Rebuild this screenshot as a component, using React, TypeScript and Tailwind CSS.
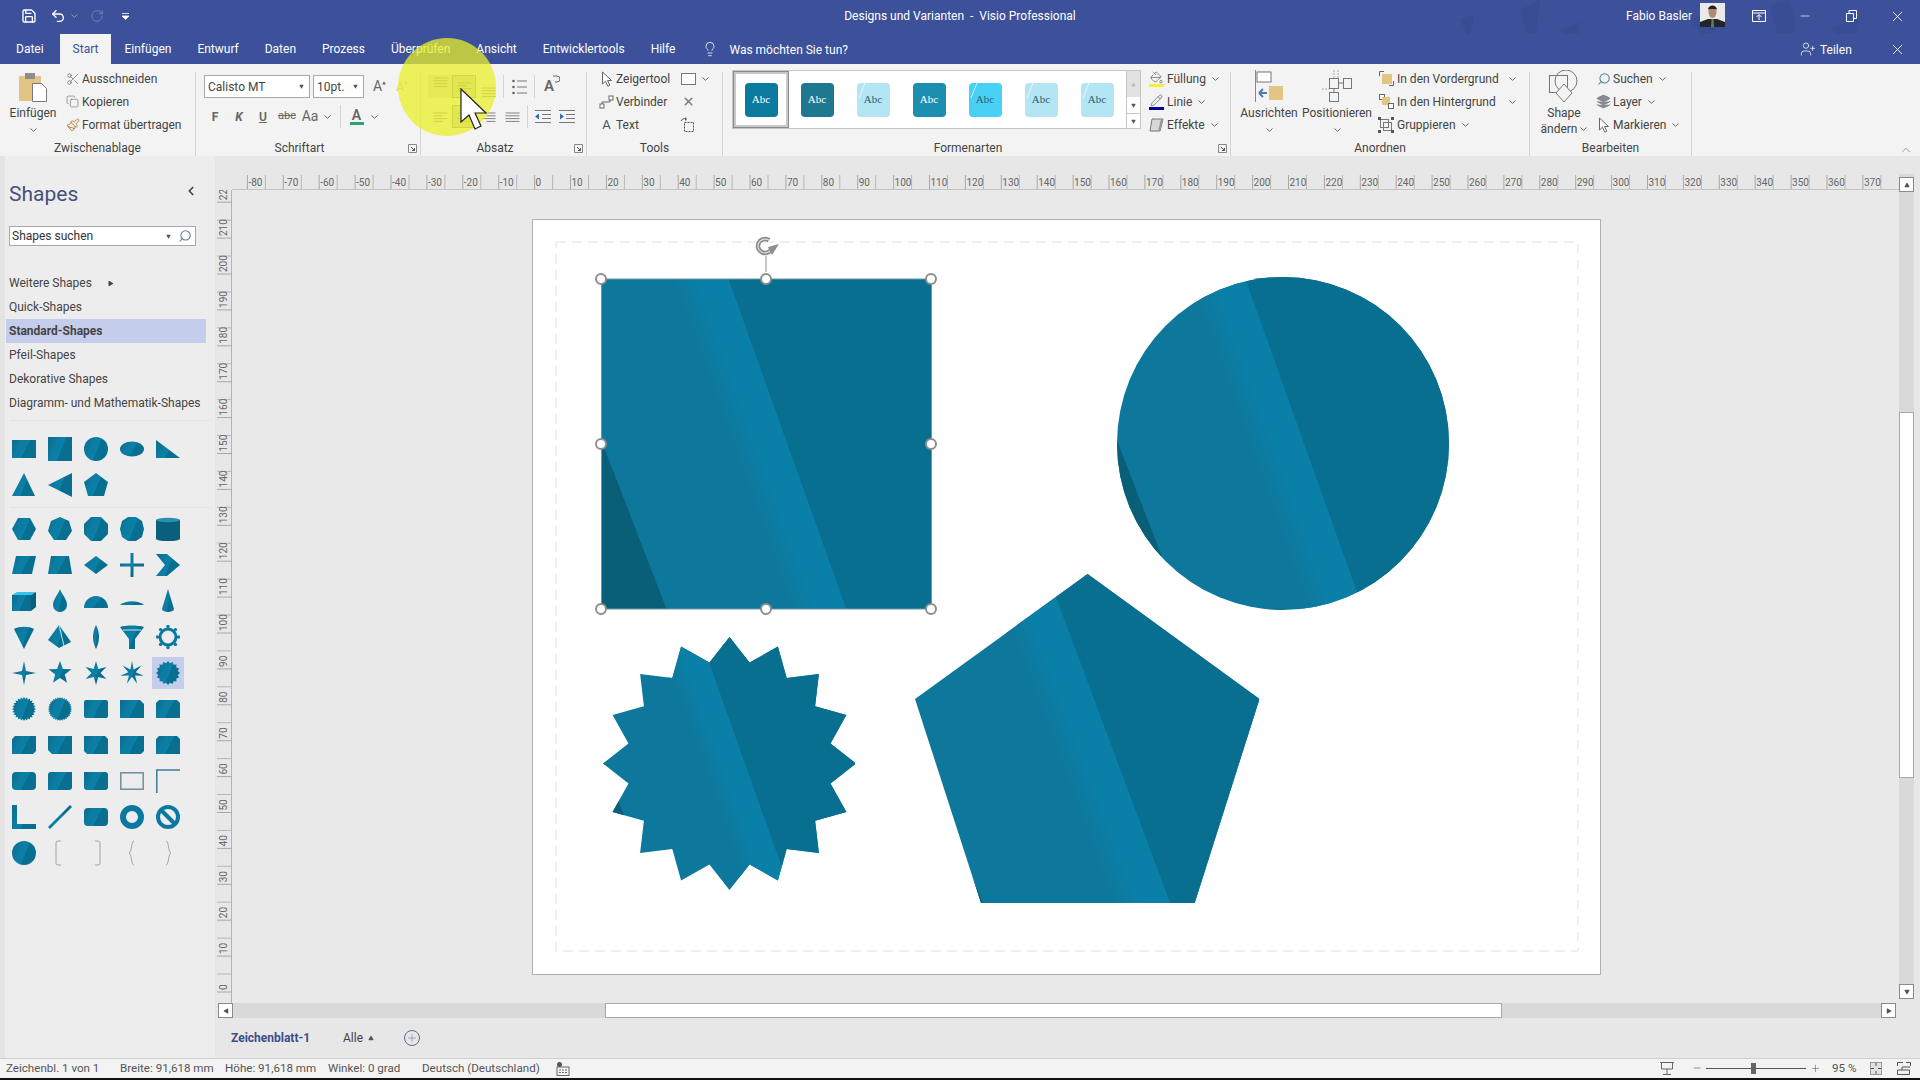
import type { ReactNode } from 'react';
import { Scissors, Copy, Paintbrush, Undo2, RotateCw, Lightbulb, Save, X, Minus, UserPlus, Search, ChevronLeft, ChevronUp, Plus, Layers, PaintBucket, Pencil, Play, Triangle } from 'lucide-react';

const TILE = 'url(#tile)';

function starPoints(n: number, R: number, r: number, cx = 12, cy = 12) {
  const pts: string[] = [];
  for (let i = 0; i < n * 2; i++) {
    const rad = i % 2 === 0 ? R : r;
    const a = (Math.PI * i) / n - Math.PI / 2;
    pts.push(`${(cx + rad * Math.cos(a)).toFixed(1)},${(cy + rad * Math.sin(a)).toFixed(1)}`);
  }
  return pts.join(' ');
}

const Pg = ({ p }: { p: string }) => <polygon points={p} fill={TILE} />;
const Rr = ({ rx = 0, y = 3, h = 18 }: { rx?: number; y?: number; h?: number }) => <rect x="0" y={y} width="24" height={h} rx={rx} fill={TILE} />;

const rowsTop: ReactNode[][] = [
  [<Rr />, <Rr y={0} h={24} />, <circle cx="12" cy="12" r="12" fill={TILE} />, <ellipse cx="12" cy="12" rx="12" ry="7.5" fill={TILE} />, <Pg p="0,3 24,21 0,21" />],
  [<Pg p="12,0 23,23 0,23" />, <Pg p="24,0 24,24 0,12" />, <Pg p="12,0 24,9 20,23 4,23 0,9" />],
];

const rowsMain: ReactNode[][] = [
  [
    <Pg p="6,1 18,1 24,12 18,23 6,23 0,12" />,
    <Pg p="12,0 21,4 24,14 18,23 6,23 0,14 3,4" />,
    <Pg p="7,0 17,0 24,7 24,17 17,24 7,24 0,17 0,7" />,
    <Pg p="8,0 16,0 22,4 24,12 22,20 16,24 8,24 2,20 0,12 2,4" />,
    <g><rect x="0" y="3" width="24" height="19" fill="#0a5f7c" /><ellipse cx="12" cy="22" rx="12" ry="2" fill="#0a5f7c" /><ellipse cx="12" cy="3" rx="12" ry="2.2" fill="#2b8fb0" /></g>,
  ],
  [
    <Pg p="4,3 24,3 20,21 0,21" />,
    <Pg p="3,3 21,3 24,21 0,21" />,
    <Pg p="12,3 24,12 12,21 0,12" />,
    <path d="M10.5 0h3v10.5H24v3H13.5V24h-3V13.5H0v-3h10.5z" fill={TILE} />,
    <Pg p="0,1 11,1 24,12 11,23 0,23 9,12" />,
  ],
  [
    <g><rect x="0" y="6" width="19" height="16" fill={TILE} /><polygon points="0,6 5,3 24,3 19,6" fill="#38c4ea" /><polygon points="19,6 24,3 24,18 19,22" fill="#0a5f7c" /></g>,
    <path d="M12 0c2 6 7 10 7 16a7 7 0 0 1-14 0c0-6 5-10 7-16z" fill={TILE} />,
    <path d="M0 19a12 12 0 0 1 24 0z" fill={TILE} />,
    <path d="M0 16c6-5 18-5 24 0z" fill={TILE} />,
    <path d="M12 0l6 20a6 3 0 0 1-12 0z" fill={TILE} />,
  ],
  [
    <path d="M2 4c5-3 15-3 20 0L12 24z" fill={TILE} />,
    <g><polygon points="11,0 23,17 11,23 0,15" fill={TILE} /><line x1="11" y1="0" x2="16" y2="21" stroke="#bfe8f4" strokeWidth="1" /></g>,
    <path d="M12 0c8 8 8 16 0 24c-8-8-8-16 0-24z" transform="translate(6 0) scale(.5 1)" fill={TILE} />,
    <g><path d="M0 2c6-2 18-2 24 0L15 14v10H9V14z" fill={TILE} /><line x1="3" y1="5" x2="21" y2="5" stroke="#bfe8f4" strokeWidth="1" /></g>,
    <g>
      <circle cx="12" cy="12" r="8" fill="none" stroke="#0a78a0" strokeWidth="3" />
      {[0, 45, 90, 135, 180, 225, 270, 315].map((d) => <circle key={d} cx={12 + 10.5 * Math.cos((d * Math.PI) / 180)} cy={12 + 10.5 * Math.sin((d * Math.PI) / 180)} r="1.7" fill="#0a78a0" />)}
    </g>,
  ],
  [
    <Pg p={starPoints(4, 12, 2.8)} />,
    <Pg p={starPoints(5, 12, 5)} />,
    <Pg p={starPoints(6, 12, 4.5)} />,
    <Pg p={starPoints(7, 12, 3.8)} />,
    <Pg p={starPoints(16, 12, 10)} />,
  ],
  [
    <Pg p={starPoints(24, 12, 10)} />,
    <Pg p={starPoints(32, 12, 10.5)} />,
    <Rr rx={2} />,
    <path d="M0 3h20l4 4v14H0z" fill={TILE} />,
    <path d="M3 3h18l3 3v15H0V6z" fill={TILE} />,
  ],
  [
    <path d="M3 3h21v15l-3 3H0V6z" fill={TILE} />,
    <path d="M0 3h24v18H4l-4-4z" fill={TILE} />,
    <path d="M0 3h21l3 3v15H3l-3-3z" fill={TILE} />,
    <path d="M0 3h24v15l-3 3H0z" fill={TILE} />,
    <path d="M3 3h18l3 3v15H0V6z" fill={TILE} />,
  ],
  [
    <Rr rx={4} />,
    <path d="M3 3h21v15a3 3 0 0 1-3 3H0V6a3 3 0 0 1 3-3z" fill={TILE} />,
    <path d="M0 3h21a3 3 0 0 1 3 3v12a3 3 0 0 1-3 3H3a3 3 0 0 1-3-3z" fill={TILE} />,
    <rect x="0.8" y="3.8" width="22.4" height="16.4" fill="none" stroke="#6d8f9e" strokeWidth="1.5" />,
    <polyline points="0.8,24 0.8,1 24,1" fill="none" stroke="#3f7d95" strokeWidth="1.5" />,
  ],
  [
    <path d="M0 0h5v19h19v5H0z" fill={TILE} />,
    <Pg p="22,0 24,2 2,24 0,22" />,
    <Rr rx={4} />,
    <circle cx="12" cy="12" r="9" fill="none" stroke="#0a78a0" strokeWidth="6" />,
    <g><circle cx="12" cy="12" r="10" fill="none" stroke="#0a78a0" strokeWidth="4" /><line x1="5" y1="5" x2="19" y2="19" stroke="#0a78a0" strokeWidth="4" /></g>,
  ],
];

function Chev({ className = '' }: { className?: string }) {
  return (
    <svg width="7" height="4" viewBox="0 0 7 4" className={className}>
      <polyline points="0.5,0.5 3.5,3.3 6.5,0.5" fill="none" stroke="#666" />
    </svg>
  );
}

function Arrow({ size = 14 }: { size?: number }) {
  return (
    <svg width={size} height={size + 2} viewBox="0 0 14 16">
      <path d="M2.500 1v12l3-2.800 2.300 5 2-.9-2.300-4.800h4z" fill="#fff" stroke="#666" />
    </svg>
  );
}

function Launcher() {
  return (
    <svg width="9" height="9" viewBox="0 0 9 9" className="absolute right-[3px] bottom-[3px]">
      <path d="M.5 8.5v-8h8v8z" fill="none" stroke="#888" />
      <path d="M3 3l3.5 3.5M6.5 4v2.5H4" fill="none" stroke="#555" />
    </svg>
  );
}

function Group({ width, label, launcher, children }: { width: string; label: string; launcher?: boolean; children: ReactNode }) {
  return (
    <div className={`relative flex flex-col ${width}`}>
      <div className="flex h-[69px]">{children}</div>
      <div className={`mt-[4px] h-[16px] text-center leading-[16px] ${launcher ? 'pr-[17px]' : ''}`}>{label}</div>
      {launcher && <Launcher />}
    </div>
  );
}

const Sep = () => <div className="mt-[5px] h-[84px] w-px bg-[#d4d4d4]" />;

function Row({ icon, iconW = 'w-[19px]', text, chev }: { icon?: ReactNode; iconW?: string; text: string; chev?: boolean }) {
  return (
    <div className="flex h-[23px] items-center whitespace-nowrap">
      <span className={`flex justify-center ${iconW}`}>{icon}</span>
      <span>{text}</span>
      {chev && <Chev className="ml-[6px]" />}
    </div>
  );
}

function BigBtn({ width, icon, lines, chevInline }: { width: string; icon: ReactNode; lines: string[]; chevInline?: boolean }) {
  return (
    <div className={`flex flex-col items-center ${width}`}>
      <div className="flex h-[35px] items-end">{icon}</div>
      <div className="mt-[3px] leading-[16px]">{lines[0]}</div>
      {chevInline ? (
        <div className="flex items-center gap-[3px] leading-[16px]">{lines[1]}<Chev /></div>
      ) : (
        <Chev className="mt-[7px]" />
      )}
    </div>
  );
}

// Paragraph lines, used for both alignment rows in Absatz
function Lines({ mode, valign = 'mid' }: { mode: 'l' | 'c' | 'r' | 'j'; valign?: 'top' | 'mid' | 'bot' }) {
  const y0 = valign === 'top' ? 1 : valign === 'mid' ? 6 : 11;
  const rows = [14, 9, 14, 9];
  return (
    <svg width="15" height="20" viewBox="0 0 15 20">
      {rows.map((w, i) => {
        const wid = mode === 'j' || valign !== 'mid' ? 14 : w;
        const x = mode === 'l' || mode === 'j' ? 0.5 : mode === 'c' ? 7.5 - wid / 2 : 14.5 - wid;
        return <line key={i} x1={x} x2={x + wid} y1={y0 + i * 2.8} y2={y0 + i * 2.8} stroke="#777" strokeWidth="0.9" />;
      })}
    </svg>
  );
}

function IconBtn({ active, soft, children }: { active?: boolean; soft?: boolean; children: ReactNode }) {
  return (
    <div className={`flex h-[23px] w-[24px] items-center justify-center ${active ? 'border border-[#8c8c8c] bg-[#c9c9c9]' : soft ? 'bg-[#dcdcdc]' : ''}`}>
      {children}
    </div>
  );
}

function Swatch({ bg, dark, selected }: { bg: string; dark?: boolean; selected?: boolean }) {
  return (
    <div className={`flex h-[57px] w-[56px] items-center justify-center ${selected ? 'border border-[#8a8a8a] outline-2 -outline-offset-3 outline-[#c8c8c8]' : ''}`}>
      <div className={`relative flex h-[34px] w-[33px] items-center justify-center rounded-[4px] font-['Liberation_Serif',serif] text-[11px] ${bg} ${dark ? 'text-[#33606e]' : 'text-white'}`}>
        {dark && (
          <svg width="33" height="34" viewBox="0 0 33 34" className="absolute inset-0">
            <line x1="8" y1="0" x2="2" y2="15" stroke="#ffffff" strokeOpacity=".7" />
          </svg>
        )}
        Abc
      </div>
    </div>
  );
}

function Clipboard() {
  return (
    <svg width="28" height="30" viewBox="0 0 28 30">
      <rect x="0" y="4" width="22" height="25" rx="1" fill="#e2c583" />
      <rect x="6" y="1" width="10" height="6" fill="#8d8d8d" />
      <path d="M13.500 11.500h9l5 5v13h-14z" fill="#fff" stroke="#7a7a7a" />
    </svg>
  );
}

function HRuler() {
  const labels = Array.from({ length: 46 }, (_, i) => -80 + i * 10);
  return (
    <svg width="1667" height="16" viewBox="232 174 1667 16">
      <line x1="232" x2="1899" y1="189.500" y2="189.500" stroke="#c4c4c4" />
      {labels.map((v) => {
        const x = 534.6 + v * 3.59;
        return (
          <g key={v}>
            <line x1={x} x2={x} y1="175" y2="189" stroke="#a8a8a8" />
            <line x1={x + 18} x2={x + 18} y1="175" y2="189" stroke="#b8b8b8" />
            <text x={x + 1} y="186" fontSize="10" fill="#666">{v}</text>
          </g>
        );
      })}
    </svg>
  );
}

function VRuler() {
  const labels = Array.from({ length: 23 }, (_, i) => i * 10);
  return (
    <svg width="17" height="813" viewBox="215 190 17 813">
      <line x1="231.500" x2="231.500" y1="190" y2="1003" stroke="#b4b4b4" />
      {labels.map((v) => {
        const y = 992 - v * 3.59;
        return (
          <g key={v}>
            <line x1="217" x2="232" y1={y} y2={y} stroke="#a8a8a8" />
            <line x1="217" x2="232" y1={y - 18} y2={y - 18} stroke="#b8b8b8" />
            <text transform={`translate(227 ${y - 2}) rotate(-90)`} fontSize="10" fill="#666">{v}</text>
          </g>
        );
      })}
    </svg>
  );
}

// The diagonal sheen that the theme lays over every shape, mapped on the shape's bounding box
function Themed({ id, x, y, w, h, shape }: { id: string; x: number; y: number; w: number; h: number; shape: ReactNode }) {
  return (
    <g>
      <clipPath id={id}>{shape}</clipPath>
      <g clipPath={`url(#${id})`}>
        <g transform={`translate(${x} ${y}) scale(${w} ${h})`}>
          <rect width="1" height="1" fill="#0e789c" />
          <polygon points="0,0.49 0.197,1 0,1" fill="#0a5f78" />
          <polygon points="0.2,0 0.385,0 0.742,1 0.56,1" fill="url(#band)" />
          <polygon points="0.385,0 1,0 1,1 0.742,1" fill="#096f90" />
        </g>
      </g>
    </g>
  );
}

function Drawing() {
  const handles = [[601, 279], [766, 279], [931, 279], [601, 444], [931, 444], [601, 609], [766, 609], [931, 609]];
  const star16 = starPoints(16, 126.5, 103, 729.500, 763.500);
  return (
    <svg width="1069" height="756" viewBox="532 219 1069 756" className="absolute -top-px -left-px">
      <defs>
        <linearGradient id="band" gradientUnits="userSpaceOnUse" x1="0.22" y1="0" x2="0.29" y2="-0.025">
          <stop offset="0" stopColor="#0e789c" />
          <stop offset="1" stopColor="#0a80a8" />
        </linearGradient>
      </defs>
      <rect x="556" y="242" width="1022" height="709" fill="none" stroke="#e2e2e2" strokeDasharray="10 6" />
      <Themed id="c-square" x={601.500} y={279} w={330} h={330} shape={<rect x="601.500" y="279" width="330" height="330" />} />
      <rect x="601.500" y="279" width="330" height="330" fill="none" stroke="#6f97aa" />
      <Themed id="c-circle" x={1117} y={277} w={332} h={333} shape={<ellipse cx="1283" cy="443.500" rx="166" ry="166.500" />} />
      <Themed id="c-star" x={603} y={637} w={252} h={253} shape={<polygon points={star16} />} />
      <Themed id="c-pent" x={915} y={574} w={344} h={329} shape={<polygon points="1087.600,574 1259.500,699 1194.700,903 981,903 915,699" />} />
      <line x1="766" x2="766" y1="256" y2="272" stroke="#8e8e8e" />
      {handles.map(([x, y]) => <circle key={`${x}-${y}`} cx={x} cy={y} r="5" fill="#fff" stroke="#8e8e8e" strokeWidth="2" />)}
      <circle cx="765" cy="246" r="7" fill="none" stroke="#8e8e8e" strokeWidth="4.500" strokeDasharray="34 10" transform="rotate(25 765 246)" />
      <circle cx="765" cy="246" r="7" fill="none" stroke="#e6e6e6" strokeWidth="1" strokeDasharray="34 10" transform="rotate(25 765 246)" />
      <polygon points="768,247 779,244 772,255" fill="#8e8e8e" />
    </svg>
  );
}

function Avatar() {
  return (
    <svg width="25" height="24" viewBox="0 0 25 24">
      <rect width="25" height="24" fill="#e9e9e9" />
      <path d="M0 24v-5l8-3h9l8 3v5z" fill="#22262b" />
      <ellipse cx="12.500" cy="9" rx="4" ry="6" fill="#b08a74" />
      <path d="M8 7c0-6 9-6 9 0l-1-1H9z" fill="#23211f" />
      <path d="M11.500 16h2l.5 8h-3z" fill="#5d7f6a" />
    </svg>
  );
}

function Palette({ rows }: { rows: ReactNode[][] }) {
  return (
    <div className="grid grid-cols-[repeat(5,36px)] pl-px">
      {rows.flatMap((row, r) =>
        row.map((icon, c) => (
          <div key={`${r}-${c}`} className="flex h-[36px] items-center justify-center">
            <div className={`flex h-[32px] w-[32px] items-center justify-center ${rows === rowsMain && r === 4 && c === 4 ? 'bg-[#c5cdec]' : ''}`}>
              <svg width="24" height="24" viewBox="0 0 24 24" overflow="visible">{icon}</svg>
            </div>
          </div>
        )),
      )}
    </div>
  );
}

function ScrollBtn({ children }: { children: ReactNode }) {
  return <div className="flex h-[15px] w-[15px] shrink-0 items-center justify-center border border-[#8a8a8a] bg-white">{children}</div>;
}

const tabs = ['Datei', 'Start', 'Einfügen', 'Entwurf', 'Daten', 'Prozess', 'Überprüfen', 'Ansicht', 'Entwicklertools', 'Hilfe'];
const stencils = ['Weitere Shapes', 'Quick-Shapes', 'Standard-Shapes', 'Pfeil-Shapes', 'Dekorative Shapes', 'Diagramm- und Mathematik-Shapes'];

export default function App() {
  return (
    <div className="relative flex h-[1080px] w-[1920px] flex-col overflow-hidden bg-black font-['Roboto',sans-serif] text-[12px] text-[#444]">
      <svg className="absolute h-0 w-0">
        <defs>
          <linearGradient id="tile" x1="0" y1="0.3" x2="1" y2="0.7">
            <stop offset="0" stopColor="#0c6f90" />
            <stop offset="0.3" stopColor="#0c7ca2" />
            <stop offset="0.55" stopColor="#0a80a8" />
            <stop offset="0.56" stopColor="#086f90" />
            <stop offset="1" stopColor="#086f90" />
          </linearGradient>
        </defs>
      </svg>

      {/* title bar */}
      <div className="relative flex h-[34px] shrink-0 items-center bg-[#3c519a] pb-[2px] text-white">
        <svg width="480" height="64" viewBox="0 0 480 64" className="absolute top-0 left-[1440px]">
          <g fill="#394d95">
            <polygon points="20,20 34,14 30,40" />
            <polygon points="80,10 100,0 96,32 88,36" />
            <polygon points="120,30 140,22 136,46" />
            <polygon points="250,20 280,6 270,44" />
            <polygon points="330,6 350,0 356,30 340,44" />
            <polygon points="390,28 420,18 412,50" />
          </g>
        </svg>
        <Save size={16} strokeWidth={2} className="absolute left-[21px]" />
        <Undo2 size={16} strokeWidth={2} className="absolute left-[50px]" />
        <Chev className="absolute left-[71px] invert" />
        <RotateCw size={14} strokeWidth={1.5} className="absolute left-[90px] opacity-30" />
        <svg width="7" height="7" viewBox="0 0 7 7" className="absolute left-[122px]"><path d="M0 .5h7M0 3h7L3.500 6.500z" stroke="#fff" fill="#fff" strokeWidth=".8" /></svg>
        <div className="w-full text-center">Designs und Varianten&nbsp; -&nbsp; Visio Professional</div>
        <span className="absolute left-[1626px]">Fabio Basler</span>
        <div className="absolute top-[3px] left-[1700px]"><Avatar /></div>
        <svg width="14" height="12" viewBox="0 0 14 12" className="absolute left-[1752px]"><path d="M.5.5h13v11H.5zM.5 3h13M7 10V5M4.500 7L7 4.500 9.500 7" fill="none" stroke="#fff" /></svg>
        <Minus size={14} strokeWidth={1.2} className="absolute left-[1798px]" />
        <svg width="11" height="12" viewBox="0 0 11 12" className="absolute left-[1846px]"><path d="M.5 3.500h7v8h-7zM3 3.500V.5h7.500v8H7.500" fill="none" stroke="#fff" /></svg>
        <X size={17} strokeWidth={1.2} className="absolute left-[1889px]" />
      </div>

      {/* tabs */}
      <div className="relative flex h-[30px] shrink-0 items-stretch bg-[#3c519a] pl-[3px] text-white">
        {tabs.map((t) => (
          <div key={t} className={`flex items-center px-[13px] ${t === 'Start' ? 'bg-[#f3f3f3] text-[#3c519a]' : ''} ${t === 'Datei' ? 'mr-[3px]' : ''}`}>{t}</div>
        ))}
        <Lightbulb size={16} strokeWidth={1.2} className="mt-[7px] ml-[14px]" />
        <span className="mt-[7px] ml-[11px]">Was möchten Sie tun?</span>
        <UserPlus size={16} strokeWidth={1.1} className="absolute top-[7px] left-[1800px]" />
        <span className="absolute top-[7px] left-[1820px]">Teilen</span>
        <X size={17} strokeWidth={1.2} className="absolute top-[7px] left-[1889px]" />
      </div>

      {/* ribbon */}
      <div className="relative flex h-[92px] shrink-0 bg-[#f3f3f3] pt-[3px]">
        <Group width="w-[195px]" label="Zwischenablage">
          <div className="ml-[10px] w-[46px]">
            <BigBtn width="w-[46px]" icon={<Clipboard />} lines={['Einfügen']} />
          </div>
          <div className="ml-[7px]">
            <Row icon={<Scissors size={14} strokeWidth={1.2} className="text-[#666]" />} text="Ausschneiden" />
            <Row icon={<Copy size={13} strokeWidth={1.1} className="text-[#666]" />} text="Kopieren" />
            <Row icon={<Paintbrush size={14} strokeWidth={1.5} className="text-[#a5712c]" />} text="Format übertragen" />
          </div>
        </Group>
        <Sep />
        <Group width="w-[224px]" label="Schriftart" launcher>
          <div>
            <div className="mt-[8px] ml-[8px] flex h-[23px] items-center">
              <div className="flex h-[23px] w-[106px] items-center justify-between border border-[#a8a8a8] bg-white pr-[5px] pl-[3px]">Calisto MT<Triangle size={5} fill="#555" strokeWidth={0} className="rotate-180" /></div>
              <div className="ml-[3px] flex h-[23px] w-[51px] items-center justify-between border border-[#a8a8a8] bg-white pr-[5px] pl-[3px]">10pt.<Triangle size={5} fill="#555" strokeWidth={0} className="rotate-180" /></div>
              <span className="ml-[9px] text-[14px] text-[#666]">A</span>
              <Triangle size={4} fill="#666" strokeWidth={0} className="mb-[8px]" />
              <span className="ml-[10px] text-[12px] text-[#bbb]">A</span>
              <Triangle size={4} fill="#bbb" strokeWidth={0} className="mb-[8px] rotate-180" />
            </div>
            <div className="mt-[7px] flex h-[23px] items-center text-[#666]">
              <span className="ml-[7px] flex w-[24px] justify-center font-bold">F</span>
              <span className="flex w-[24px] justify-center font-bold italic">K</span>
              <span className="flex w-[24px] justify-center font-semibold underline">U</span>
              <span className="flex w-[24px] justify-center text-[11px] line-through">abc</span>
              <span className="flex w-[22px] justify-center text-[14px]">Aa</span>
              <Chev className="ml-[3px]" />
              <div className="ml-[9px] h-[23px] w-px bg-[#d4d4d4]" />
              <div className="ml-[8px] flex w-[15px] flex-col items-center">
                <span className="text-[14px] leading-[14px] font-semibold">A</span>
                <div className="h-[3px] w-[14px] bg-[#2f9e7d]" />
              </div>
              <Chev className="ml-[7px]" />
            </div>
          </div>
        </Group>
        <Sep />
        <Group width="w-[165px]" label="Absatz" launcher>
          <div className="pl-[7px]">
            <div className="mt-[8px] flex h-[23px] items-center">
              <IconBtn soft><Lines mode="l" valign="top" /></IconBtn>
              <IconBtn active><Lines mode="l" valign="mid" /></IconBtn>
              <IconBtn><Lines mode="l" valign="bot" /></IconBtn>
              <div className="ml-[3px] h-[23px] w-px bg-[#d4d4d4]" />
              <div className="flex w-[30px] justify-center">
                <svg width="15" height="16" viewBox="0 0 15 16"><g stroke="#777"><path d="M5 2h10M5 8h10M5 14h10" /></g><g fill="#666"><circle cx="1.500" cy="2" r="1.300" /><circle cx="1.500" cy="8" r="1.300" /><circle cx="1.500" cy="14" r="1.300" /></g></svg>
              </div>
              <div className="h-[23px] w-px bg-[#d4d4d4]" />
              <span className="relative flex w-[28px] justify-center text-[15px] font-semibold text-[#666]">
                A
                <svg width="8" height="8" viewBox="0 0 8 8" className="absolute top-0 right-[3px]"><path d="M1 1h4a3 3 0 0 1 0 6H3" fill="none" stroke="#666" /></svg>
              </span>
            </div>
            <div className="mt-[7px] flex h-[23px] items-center">
              <IconBtn><Lines mode="l" /></IconBtn>
              <IconBtn active><Lines mode="c" /></IconBtn>
              <IconBtn><Lines mode="r" /></IconBtn>
              <IconBtn><Lines mode="j" /></IconBtn>
              <div className="ml-[3px] h-[23px] w-px bg-[#d4d4d4]" />
              <div className="ml-[3px] flex w-[24px] justify-center">
                <svg width="16" height="13" viewBox="0 0 16 13"><path d="M0 .5h16M7 4.500h9M7 8.500h9M0 12.500h16" stroke="#777" /><path d="M0 6.500l4-3v6z" fill="#2f6fb5" /></svg>
              </div>
              <div className="flex w-[24px] justify-center">
                <svg width="16" height="13" viewBox="0 0 16 13"><path d="M0 .5h16M7 4.500h9M7 8.500h9M0 12.500h16" stroke="#777" /><path d="M5 6.500l-4-3v6z" fill="#2f6fb5" /></svg>
              </div>
            </div>
          </div>
        </Group>
        <Sep />
        <Group width="w-[135px]" label="Tools">
          <div className="pl-[10px]">
            <div className="flex h-[23px] items-center">
              <div className="w-[81px]"><Row icon={<Arrow />} text="Zeigertool" /></div>
              <div className="flex w-[20px] justify-center"><div className="h-[12px] w-[15px] border border-[#777] bg-white" /></div>
              <Chev className="ml-[4px]" />
            </div>
            <div className="flex h-[23px] items-center">
              <div className="w-[81px]">
                <Row icon={<svg width="16" height="14" viewBox="0 0 16 14"><path d="M3 13V7h8V2" fill="none" stroke="#666" /><rect x="1" y="9" width="4" height="4" fill="#fff" stroke="#666" /><rect x="10" y="1" width="4" height="4" fill="#fff" stroke="#666" /></svg>} text="Verbinder" />
              </div>
              <div className="flex w-[20px] justify-center"><X size={13} strokeWidth={3} className="text-[#73808f]" /></div>
            </div>
            <div className="flex h-[23px] items-center">
              <div className="w-[81px]"><Row icon={<span className="text-[13px] text-[#555]">A</span>} text="Text" /></div>
              <div className="flex w-[20px] justify-center">
                <svg width="16" height="16" viewBox="0 0 16 16"><rect x="4.500" y="5.500" width="9" height="9" fill="none" stroke="#555" strokeDasharray="2 1" /><path d="M1 4c1-2 3-3 5-2" fill="none" stroke="#555" /><path d="M5 0l2 2-2 2z" fill="#555" /></svg>
              </div>
            </div>
          </div>
        </Group>
        <Sep />
        <Group width="w-[507px]" label="Formenarten" launcher>
          <div className="mt-[3px] ml-[9px] flex h-[59px] w-[409px] border border-[#c6c6c6] bg-white">
            <Swatch bg="bg-[#0a7a9e]" selected />
            <Swatch bg="bg-[#1d7890]" />
            <Swatch bg="bg-[#b4e5f2]" dark />
            <Swatch bg="bg-[#1c8fb0]" />
            <Swatch bg="bg-[#48d0f5]" dark />
            <Swatch bg="bg-[#b4e5f2]" dark />
            <Swatch bg="bg-[#b4e5f2]" dark />
            <div className="ml-auto flex w-[14px] flex-col border-l border-[#c6c6c6]">
              <div className="flex h-[26px] items-center justify-center bg-[#e2e2e2]"><Triangle size={5} fill="#bbb" strokeWidth={0} /></div>
              <div className="flex h-[16px] items-center justify-center"><Triangle size={5} fill="#555" strokeWidth={0} className="rotate-180" /></div>
              <div className="flex flex-1 items-center justify-center border-t border-[#c6c6c6]"><Triangle size={5} fill="#555" strokeWidth={0} className="rotate-180" /></div>
            </div>
          </div>
          <div className="ml-[4px]">
            <Row iconW="w-[22px]" icon={<div className="flex flex-col items-center"><PaintBucket size={13} strokeWidth={1.2} className="text-[#555]" /><div className="h-[3px] w-[15px] bg-[#f3f03c]" /></div>} text="Füllung" chev />
            <Row iconW="w-[22px]" icon={<div className="flex flex-col items-center"><Pencil size={13} strokeWidth={1.2} className="text-[#555]" /><div className="h-[3px] w-[15px] bg-[#00009c]" /></div>} text="Linie" chev />
            <Row iconW="w-[22px]" icon={<svg width="15" height="14" viewBox="0 0 15 14"><path d="M3 1h11l-3 12H1z" fill="#d8d8d8" stroke="#777" /><path d="M12 1l2 0-3 12H9z" fill="#999" /></svg>} text="Effekte" chev />
          </div>
        </Group>
        <Sep />
        <Group width="w-[298px]" label="Anordnen">
          <div className="ml-[8px]">
            <BigBtn
              width="w-[60px]"
              lines={['Ausrichten']}
              icon={<svg width="28" height="32" viewBox="0 0 28 32"><path d="M.5 0v32" stroke="#888" /><rect x="2" y="2" width="14" height="10" fill="#fff" stroke="#777" /><rect x="14" y="16" width="14" height="14" fill="#e2c583" /><path d="M4 23h8M4 23l4-4M4 23l4 4" stroke="#4f7da8" strokeWidth="2" fill="none" /></svg>}
            />
          </div>
          <BigBtn
            width="w-[76px]"
            lines={['Positionieren']}
            icon={<svg width="30" height="32" viewBox="0 0 30 32"><g fill="none" stroke="#777"><rect x="7.500" y="8.500" width="9" height="10" /><rect x="21.500" y="8.500" width="8" height="10" /><rect x="7.500" y="22.500" width="9" height="9" /><path d="M16 13h6M12 18v5" /><path d="M12 0v8M16 0v8M0 19h7" strokeDasharray="2 1" stroke="#aaa" /></g></svg>}
          />
          <div>
            <div className="flex items-center">
              <div className="w-[128px]"><Row iconW="w-[22px]" icon={<svg width="15" height="15" viewBox="0 0 15 15"><rect x="3" y="3" width="10" height="10" fill="#e2c583" /><path d="M.5 5V.5H5M14.500 10v4.500H10" fill="none" stroke="#666" /></svg>} text="In den Vordergrund" /></div>
              <Chev className="ml-[6px]" />
            </div>
            <div className="flex items-center">
              <div className="w-[128px]"><Row iconW="w-[22px]" icon={<svg width="15" height="15" viewBox="0 0 15 15"><rect x=".5" y=".5" width="5" height="5" fill="#fff" stroke="#666" /><rect x="3" y="3" width="8" height="8" fill="#e2c583" /><rect x="9.500" y="9.500" width="5" height="5" fill="#fff" stroke="#666" /></svg>} text="In den Hintergrund" /></div>
              <Chev className="ml-[6px]" />
            </div>
            <Row iconW="w-[22px]" icon={<svg width="16" height="16" viewBox="0 0 16 16"><g fill="none" stroke="#777"><rect x="2.500" y="2.500" width="8" height="8" /><rect x="5.500" y="5.500" width="8" height="8" /></g><g fill="#555"><rect width="3" height="3" /><rect x="13" width="3" height="3" /><rect y="13" width="3" height="3" /><rect x="13" y="13" width="3" height="3" /></g></svg>} text="Gruppieren" chev />
          </div>
        </Group>
        <Sep />
        <Group width="w-[161px]" label="Bearbeiten">
          <div className="ml-[4px]">
            <BigBtn
              width="w-[60px]"
              lines={['Shape', 'ändern']}
              chevInline
              icon={<svg width="30" height="32" viewBox="0 0 30 32"><g fill="none" stroke="#777"><rect x=".5" y="5.500" width="18" height="17" /><circle cx="17" cy="11" r="11" /><path d="M15 14l8 9-8 9-8-9z" fill="#f3f3f3" /></g></svg>}
            />
          </div>
          <div>
            <Row icon={<Search size={14} strokeWidth={1.8} className="-scale-x-100 text-[#5d7f93]" />} text="Suchen" chev />
            <Row icon={<Layers size={15} strokeWidth={1.6} fill="#8b8b8b" className="text-[#7b8b9c]" />} text="Layer" chev />
            <Row icon={<Arrow />} text="Markieren" chev />
          </div>
        </Group>
        <Sep />
        <ChevronUp size={14} strokeWidth={1} className="absolute top-[79px] left-[1899px] text-[#555]" />
      </div>

      {/* middle */}
      <div className="flex h-[902px] shrink-0">
        <div className="w-[215px] shrink-0 border-l-[5px] border-[#e4e4e4] bg-[#ededed]">
          <div className="flex h-[70px] items-start justify-between pt-[23px] pr-[17px] pl-[4px]">
            <span className="text-[21px] leading-[30px] text-[#47507f]">Shapes</span>
            <ChevronLeft size={14} strokeWidth={3} className="mt-[5px] text-[#444]" />
          </div>
          <div className="ml-[4px] flex h-[20px] w-[187px] items-center justify-between border border-[#a8a8a8] bg-white pr-[3px] pl-[2px] text-[#333]">
            Shapes suchen
            <span className="flex items-center gap-[7px]">
              <Triangle size={5} fill="#555" strokeWidth={0} className="rotate-180" />
              <Search size={14} strokeWidth={1.8} className="-scale-x-100 text-[#5d7f93]" />
            </span>
          </div>
          <div className="mt-[25px]">
            {stencils.map((s) => (
              <div key={s} className={`flex h-[24px] w-[200px] items-center pl-[3px] ${s === 'Standard-Shapes' ? 'ml-px bg-[#c5cdec] pl-[2px] font-bold' : 'ml-px'}`}>
                {s}
                {s === 'Weitere Shapes' && <Play size={7} fill="#444" strokeWidth={0} className="ml-[15px]" />}
              </div>
            ))}
          </div>
          <div className="mx-[5px] mt-[5px] h-px bg-[#e2e2e2]" />
          <div className="mt-[10px]"><Palette rows={rowsTop} /></div>
          <div className="mx-[5px] mt-[4px] h-px bg-[#e2e2e2]" />
          <div className="mt-[3px]"><Palette rows={rowsMain} /></div>
          <div className="flex h-[36px] items-center pl-px">
            <div className="flex w-[36px] justify-center"><svg width="24" height="24"><circle cx="12" cy="12" r="12" fill={TILE} /></svg></div>
            <div className="flex w-[72px] justify-center">
              <svg width="46" height="26" viewBox="0 0 46 26" fill="none" stroke="#97a6ad"><path d="M6 1H3a2 2 0 0 0-2 2v20a2 2 0 0 0 2 2h3M40 1h3a2 2 0 0 1 2 2v20a2 2 0 0 1-2 2h-3" /></svg>
            </div>
            <div className="flex w-[72px] justify-center">
              <svg width="44" height="26" viewBox="0 0 44 26" fill="none" stroke="#97a6ad"><path d="M6 1C3 1 4 12 1 13c3 1 2 12 5 12M38 1c3 0 2 11 5 12-3 1-2 12-5 12" /></svg>
            </div>
          </div>
        </div>

        <div className="flex w-[1705px] flex-col bg-[#e7e7e7]">
          <div className="h-[18px] shrink-0" />
          <div className="flex h-[829px] shrink-0">
            <div className="flex w-[1684px] flex-col">
              <div className="flex h-[16px]">
                <div className="w-[17px]" />
                <HRuler />
              </div>
              <div className="flex h-[813px]">
                <VRuler />
                <div className="flex-1 overflow-hidden bg-[#e9e9e9] pt-[29px] pl-[300px]">
                  <div className="relative h-[756px] w-[1069px] border border-[#b0b0b0] bg-white">
                    <Drawing />
                  </div>
                </div>
              </div>
            </div>
            <div className="flex h-[825px] w-[15px] flex-col items-stretch bg-[#d9d9d9]">
              <div className="h-[3px]" />
              <ScrollBtn><Triangle size={6} fill="#555" strokeWidth={0} /></ScrollBtn>
              <div className="h-[220px]" />
              <div className="h-[366px] border border-[#a8a8a8] bg-white" />
              <div className="flex-1" />
              <ScrollBtn><Triangle size={6} fill="#555" strokeWidth={0} className="rotate-180" /></ScrollBtn>
            </div>
          </div>
          <div className="ml-[3px] flex h-[15px] w-[1678px] shrink-0 bg-[#d9d9d9]">
            <ScrollBtn><Triangle size={6} fill="#555" strokeWidth={0} className="-rotate-90" /></ScrollBtn>
            <div className="w-[372px]" />
            <div className="w-[897px] border border-[#a8a8a8] bg-white" />
            <div className="flex-1" />
            <ScrollBtn><Triangle size={6} fill="#555" strokeWidth={0} className="rotate-90" /></ScrollBtn>
          </div>
          <div className="flex flex-1 items-center pl-[16px]">
            <span className="w-[112px] font-bold text-[#3c4e8c]">Zeichenblatt-1</span>
            <span>Alle</span>
            <Triangle size={6} fill="#555" strokeWidth={0} className="ml-[5px]" />
            <div className="ml-[30px] flex h-[16px] w-[16px] items-center justify-center rounded-full border border-[#5b6a94]">
              <Plus size={12} strokeWidth={1} className="text-[#5b6a94]" />
            </div>
          </div>
        </div>
      </div>

      {/* status bar */}
      <div className="flex h-[20px] shrink-0 items-center border-t border-[#cfcfcf] bg-[#f3f3f3] pl-[6px] text-[11.6px] text-[#555]">
        <span className="w-[114px]">Zeichenbl. 1 von 1</span>
        <span className="w-[105px]">Breite: 91,618 mm</span>
        <span className="w-[103px]">Höhe: 91,618 mm</span>
        <span className="w-[94px]">Winkel: 0 grad</span>
        <span className="w-[134px]">Deutsch (Deutschland)</span>
        <svg width="14" height="14" viewBox="0 0 14 14"><rect x="1" y="5" width="12" height="8.500" fill="none" stroke="#666" /><circle cx="3.500" cy="2.500" r="2.500" fill="#555" /><path d="M3 8h8M3 10.500h8" stroke="#666" strokeDasharray="2 1" /></svg>
        <div className="ml-auto flex items-center pr-[9px]">
          <svg width="16" height="15" viewBox="0 0 16 15"><path d="M1 1.500h14M2.500 2v6h11V2M8 8v5M4 13.500h8" fill="none" stroke="#666" /></svg>
          <Minus size={10} strokeWidth={1.5} className="ml-[17px]" />
          <div className="relative ml-[4px] h-px w-[100px] bg-[#555]">
            <div className="absolute top-[-5px] left-[45px] h-[11px] w-[5px] bg-[#666]" />
          </div>
          <Plus size={11} strokeWidth={1.2} className="ml-[4px]" />
          <span className="ml-[11px] w-[26px] whitespace-nowrap">95 %</span>
          <svg width="12" height="13" viewBox="0 0 12 13" className="ml-[12px]"><rect x=".5" y=".5" width="11" height="12" fill="#e0e0e0" stroke="#999" /><path d="M6 1v3M6 9v3M1 6.500h3M8 6.500h3" stroke="#555" /></svg>
          <svg width="14" height="13" viewBox="0 0 14 13" className="ml-[15px]"><path d="M.5 4V.5H6M9 .5h4.500V4M.5 12.500h12V8H.5zM5 8V5h8" fill="none" stroke="#555" /></svg>
        </div>
      </div>
      <div className="h-[2px] shrink-0 bg-[#111]" />

      {/* presenter highlight and mouse pointer over the ribbon */}
      <div className="absolute top-[38px] left-[398px] h-[98px] w-[98px] rounded-full bg-[#e9ef28]/75" />
      <svg width="28" height="42" viewBox="0 0 28 42" className="absolute top-[88px] left-[460px]">
        <path d="M1 1v33l8-7 6 14 6-3-6-13h11z" fill="#fff" stroke="#222" strokeWidth="1.200" />
      </svg>
    </div>
  );
}
